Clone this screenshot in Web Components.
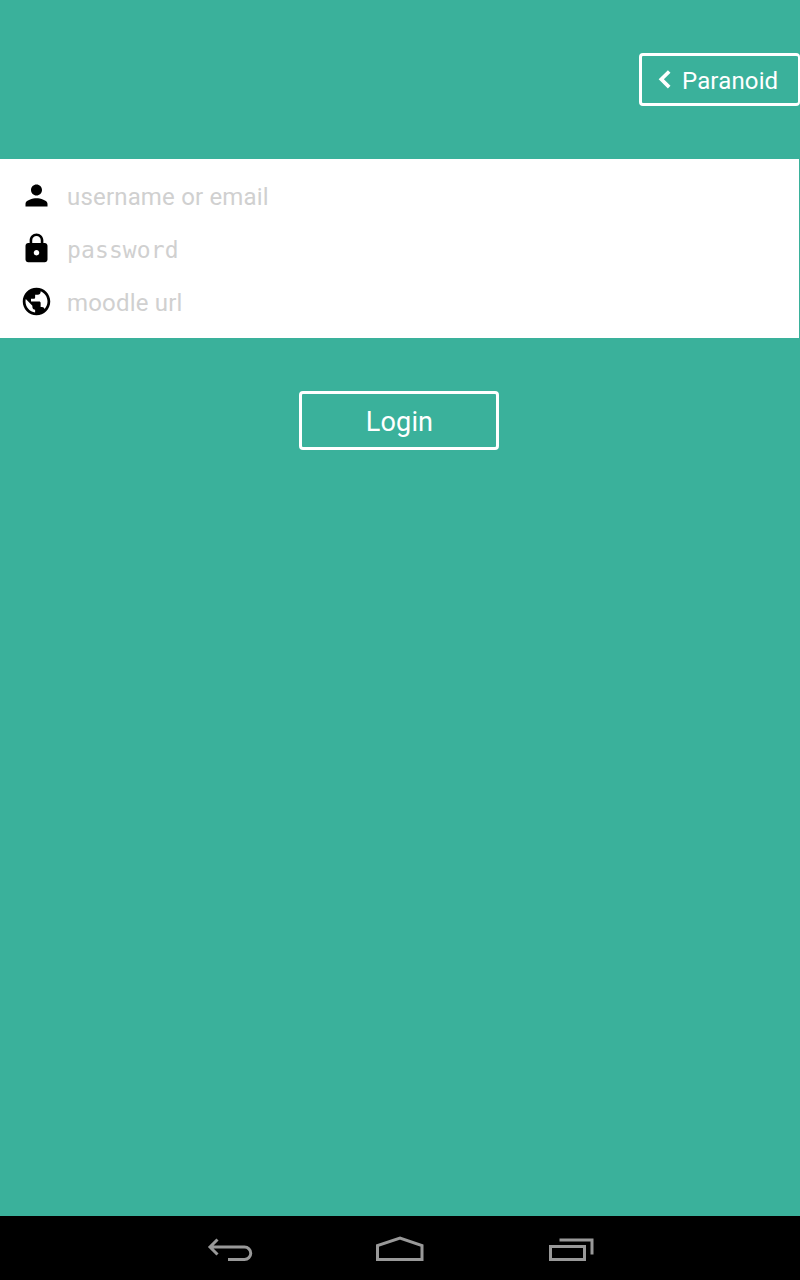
<!DOCTYPE html>
<html lang="en">
<head>
<meta charset="utf-8">
<title>Login</title>
<style>
html,body{margin:0;height:100%;background:#3ab19b;overflow:hidden}
</style>
</head>
<body>
<login-screen></login-screen>
<script>
const define = (name, html) => customElements.define(name, class extends HTMLElement {
  constructor() {
    super();
    this.attachShadow({ mode: 'open' }).innerHTML = html;
  }
});

define('outline-button', `
<style>
:host{display:flex;align-items:center;box-sizing:border-box;border:3px solid #fff;border-radius:4px;color:#fff;white-space:nowrap}
</style><slot name="icon"></slot><slot></slot>`);

define('form-field', `
<style>
:host{display:flex;align-items:center;height:53px;box-sizing:border-box;padding-left:20px;color:#d0d0d0;font-size:24px;line-height:30px;white-space:nowrap}
::slotted(svg){width:33px;height:33px;margin:0 14px 2px 0;fill:#000;flex:none}
</style><slot name="icon"></slot><slot></slot>`);

define('nav-bar', `
<style>
:host{display:flex;height:64px;background:#000;justify-content:center}
svg{width:171px;height:64px;fill:none;stroke:#999;stroke-width:3;flex:none}
</style>
<svg viewBox="0 0 171 64"><path d="M66.500 31H101.500a6.200 6.200 0 0 1 0 12.500H85M74.500 23.500L67 31L74.500 38.500" transform="translate(-1 0)" /></svg>
<svg viewBox="0 0 171 64"><path d="M63 43.500V29.500L85.500 22L107.500 29.500V43.500Z" transform="translate(-.5 0)"/></svg>
<svg viewBox="0 0 171 64"><path d="M65.500 30.500H99.500V43.500H65.500ZM74.500 24H107V38.500" transform="translate(-1 0)"/></svg>`);

define('login-screen', `
<style>
:host{display:flex;flex-direction:column;width:800px;height:1280px;box-sizing:border-box;padding-top:53px;background:#3ab19b;font-family:Roboto,sans-serif;overflow:hidden}
.site{align-self:flex-end;width:161px;height:53px;padding-left:15px;border-right-width:2px;font-size:24px}
.site span{letter-spacing:.15px;margin-left:8px;position:relative;top:1px}
.site svg{width:17px;height:22px;fill:none;stroke:#fff;stroke-width:3.700}
.panel{margin:53px 1px 0 0;height:179px;box-sizing:border-box;padding:11px 0 9px;background:#fff}
.text{letter-spacing:.18px}
.login{align-self:center;width:200px;height:59px;margin:53px 2px 0 0;justify-content:center;font-size:27px}
.login span{position:relative;top:1px;left:.5px;letter-spacing:.15px}
.mono{font:23px "DejaVu Sans Mono",monospace;letter-spacing:.12px}
nav-bar{margin-top:auto}
</style>
<outline-button class="site"><svg slot="icon" viewBox="0 0 17 22"><path d="M12.200 2.500L4.300 10.300L12.200 18.100"/></svg><span>Paranoid</span></outline-button>
<section class="panel">
<form-field><svg slot="icon" viewBox="0 0 24 24"><path d="M12 12c2.210 0 4-1.790 4-4s-1.790-4-4-4-4 1.790-4 4 1.790 4 4 4zm0 2c-2.670 0-8 1.340-8 4v2h16v-2c0-2.660-5.330-4-8-4z"/></svg><span class="text">username or email</span></form-field>
<form-field><svg slot="icon" viewBox="0 0 24 24"><path fill-rule="evenodd" d="M18 8h-1V6c0-2.760-2.240-5-5-5S7 3.240 7 6v2H6c-1.100 0-2 .9-2 2v10c0 1.100.9 2 2 2h12c1.100 0 2-.9 2-2V10c0-1.100-.9-2-2-2zm-6 9c-1.100 0-2-.9-2-2s.9-2 2-2 2 .9 2 2-.9 2-2 2zm3.100-9H8.900V6c0-1.710 1.390-3.100 3.100-3.100s3.100 1.390 3.100 3.100v2z"/></svg><span class="mono">password</span></form-field>
<form-field><svg slot="icon" viewBox="0 0 24 24"><path d="M12 2C6.480 2 2 6.480 2 12s4.480 10 10 10 10-4.480 10-10S17.520 2 12 2zm-1 17.930c-3.950-.49-7-3.850-7-7.930 0-.62.080-1.210.210-1.790L9 15v1c0 1.100.9 2 2 2v1.930zm6.900-2.540c-.26-.81-1-1.390-1.900-1.390h-1v-3c0-.55-.45-1-1-1H8v-2h2c.55 0 1-.45 1-1V7h2c1.100 0 2-.9 2-2v-.41c2.930 1.190 5 4.060 5 7.410 0 2.080-.8 3.970-2.100 5.390z"/></svg><span class="text">moodle url</span></form-field>
</section>
<outline-button class="login"><span>Login</span></outline-button>
<nav-bar></nav-bar>`);
</script>
</body>
</html>
